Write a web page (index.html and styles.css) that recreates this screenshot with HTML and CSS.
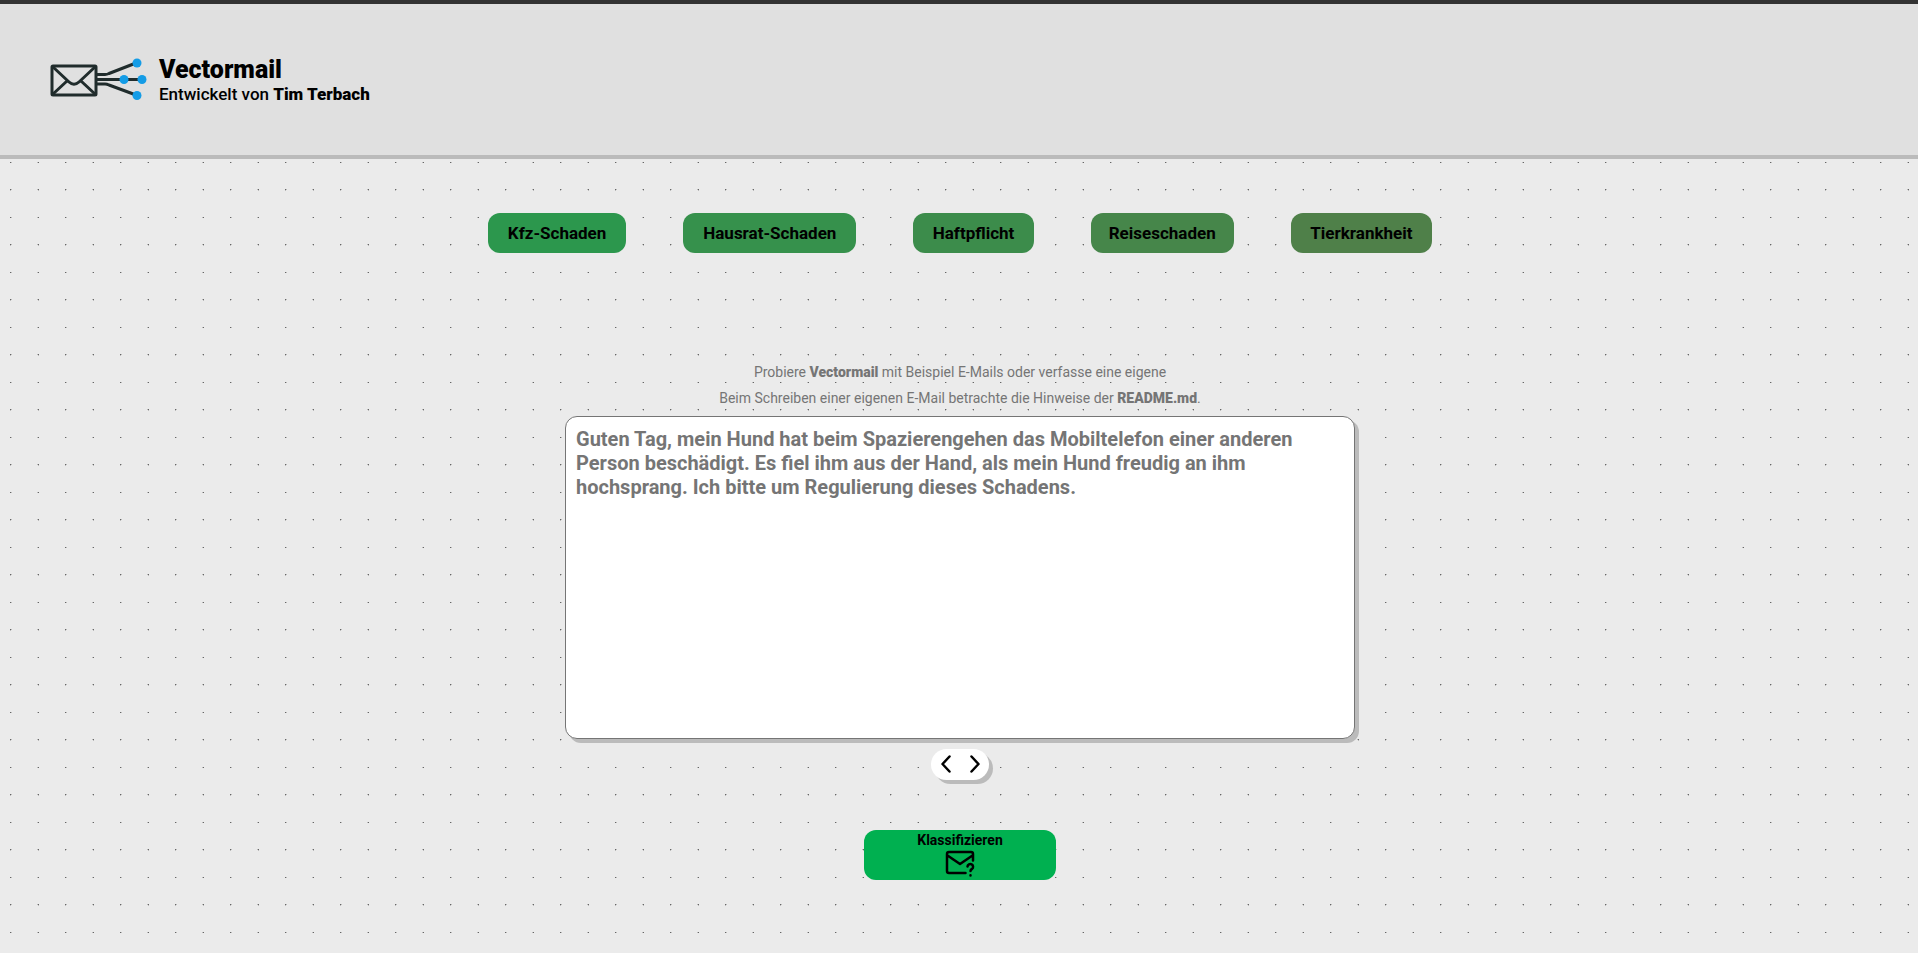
FILE: index.html
```html
<!DOCTYPE html>
<html lang="de">
<head>
<meta charset="utf-8">
<meta name="viewport" content="width=device-width, initial-scale=1">
<title>Vectormail</title>
<link rel="stylesheet" href="styles.css">
</head>
<body>
<header class="header">
  <svg class="logo" viewBox="0 0 100 48" aria-hidden="true">
    <g class="logo-lines">
      <rect x="3" y="10" width="44" height="29" rx="1"/>
      <path d="M4 11 L20 26 Q25 30.500 30 26 L46 11 M4 38 L18 25 M46 38 L32 25"/>
      <path d="M47 18.500 H56 Q58 18.500 60 17.500 L87 7 M47 23.500 H90 M47 28 H56 Q58 28 60 29 L87 39"/>
    </g>
    <g class="logo-dots">
      <circle cx="88" cy="7" r="4.500"/>
      <circle cx="75" cy="23.500" r="4.500"/>
      <circle cx="93" cy="23.500" r="4.500"/>
      <circle cx="88" cy="39.500" r="4.500"/>
    </g>
  </svg>
  <div class="brand">
    <h1 class="brand-name">Vectormail</h1>
    <p class="brand-author">Entwickelt von <strong>Tim Terbach</strong></p>
  </div>
</header>
<main class="main">
  <div class="categories">
    <button class="category category-kfz" type="button">Kfz-Schaden</button>
    <button class="category category-hausrat" type="button">Hausrat-Schaden</button>
    <button class="category category-haftpflicht" type="button">Haftpflicht</button>
    <button class="category category-reise" type="button">Reiseschaden</button>
    <button class="category category-tier" type="button">Tierkrankheit</button>
  </div>
  <label class="hint" for="mail">Probiere <strong>Vectormail</strong> mit Beispiel E-Mails oder verfasse eine eigene<br>Beim Schreiben einer eigenen E-Mail betrachte die Hinweise der <strong>README.md</strong>.</label>
  <textarea class="mail" id="mail" placeholder="Guten Tag, mein Hund hat beim Spazierengehen das Mobiltelefon einer anderen&#10;Person beschädigt. Es fiel ihm aus der Hand, als mein Hund freudig an ihm&#10;hochsprang. Ich bitte um Regulierung dieses Schadens."></textarea>
  <div class="pager">
    <button class="pager-button" type="button" aria-label="Vorheriges Beispiel">
      <svg class="chevron" viewBox="0 0 10 18" aria-hidden="true"><path d="M8.500 1.500 L1.500 9 L8.500 16.500"/></svg>
    </button>
    <button class="pager-button" type="button" aria-label="Nächstes Beispiel">
      <svg class="chevron" viewBox="0 0 10 18" aria-hidden="true"><path d="M1.500 1.500 L8.500 9 L1.500 16.500"/></svg>
    </button>
  </div>
  <button class="classify" type="button">
    <span>Klassifizieren</span>
    <svg class="classify-icon" viewBox="0 0 28 26" aria-hidden="true">
      <path d="M19.500 22 H3 Q1 22 1 20 V3 Q1 1 3 1 H25 Q27 1 27 3 V9.500 M1.500 4.500 L14 13 L26.500 4.500"/>
      <path d="M21.500 15.500 A2.800 2.800 0 1 1 26 18 Q24.500 18.700 24.500 20 M24.500 24.200 V24.400"/>
    </svg>
  </button>
</main>
</body>
</html>
```
FILE: styles.css
```css
* {
  box-sizing: border-box;
}

body {
  margin: 0;
  min-height: 100vh;
  color: #000;
  font-family: Roboto, "Liberation Sans", sans-serif;
  background-color: #ebebeb;
  background-image: url("data:image/svg+xml,%3Csvg xmlns='http://www.w3.org/2000/svg' width='55' height='55' shape-rendering='crispEdges'%3E%3Cg fill='%23666'%3E%3Crect x='10' y='52' width='1' height='1'/%3E%3Crect x='38' y='52' width='1' height='1'/%3E%3Crect x='10' y='24' width='1' height='1'/%3E%3Crect x='38' y='24' width='1' height='1'/%3E%3C/g%3E%3Cg fill='%23bbb'%3E%3Crect x='11' y='52' width='1' height='1'/%3E%3Crect x='37' y='52' width='1' height='1'/%3E%3Crect x='11' y='24' width='1' height='1'/%3E%3Crect x='37' y='24' width='1' height='1'/%3E%3Crect x='10' y='25' width='1' height='1'/%3E%3Crect x='38' y='25' width='1' height='1'/%3E%3C/g%3E%3C/svg%3E");
}

button {
  border: 0;
  padding: 0;
  color: inherit;
  font-family: inherit;
  cursor: pointer;
}

.header {
  display: flex;
  align-items: center;
  gap: 10px;
  padding: 50px 49px;
  border-top: 4px solid #333;
  border-bottom: 4px solid #bbb;
  background: #e0e0e0;
}

.logo {
  width: 100px;
  height: 48px;
}

.logo-lines {
  fill: none;
  stroke: #202c2c;
  stroke-width: 3;
  stroke-linejoin: round;
}

.logo-dots {
  fill: #149ce6;
}

.brand-name {
  margin: 0;
  padding-top: 3px;
  font-size: 25px;
  font-weight: 900;
  line-height: 26px;
}

.brand-author {
  margin: 0;
  font-size: 17px;
  font-weight: 500;
  line-height: 22px;
}

.brand-author strong {
  font-weight: 900;
}

.main {
  display: flex;
  flex-direction: column;
  align-items: center;
  padding: 54px 16px 54px 18px;
}

.categories {
  display: grid;
  grid-template-columns: 138fr 173fr 120fr 143fr 141fr;
  gap: 57px;
  width: 100%;
  max-width: 944px;
  margin-bottom: 106px;
}

.category {
  height: 40px;
  border-radius: 12px;
  font-size: 17px;
  font-weight: 700;
}

.category-kfz {
  background: #2c974d;
}

.category-hausrat {
  background: #36914c;
}

.category-haftpflicht {
  background: #3c8c4b;
}

.category-reise {
  background: #46864a;
}

.category-tier {
  background: #4f8049;
}

.hint {
  margin-bottom: 5px;
  color: #757575;
  font-size: 14px;
  font-weight: 400;
  line-height: 26px;
  text-align: center;
}

.hint strong {
  font-weight: 900;
}

.mail {
  width: 100%;
  max-width: 790px;
  height: 323px;
  padding: 10px;
  border: 1px solid #757575;
  border-radius: 12px;
  background: #fff;
  box-shadow: 4px 4px #bbb;
  font-family: inherit;
  font-size: 20px;
  font-weight: 700;
  line-height: 24px;
  resize: none;
}

.mail::placeholder {
  color: #757575;
}

.pager {
  display: flex;
  margin: 10px 0 50px;
  border-radius: 16px;
  background: #fff;
  box-shadow: 4px 4px #bbb;
}

.pager-button {
  display: grid;
  place-items: center;
  width: 29px;
  height: 31px;
  padding-bottom: 1px;
  background: none;
}

.chevron {
  width: 10px;
  height: 18px;
  fill: none;
  stroke: #000;
  stroke-width: 2.5;
  stroke-linecap: round;
  stroke-linejoin: round;
}

.classify {
  display: flex;
  flex-direction: column;
  align-items: center;
  gap: 1px;
  width: 192px;
  height: 50px;
  border-radius: 12px;
  background: #00b050;
  font-size: 14px;
  font-weight: 700;
  line-height: 20px;
}

.classify-icon {
  width: 28px;
  height: 26px;
  overflow: visible;
  fill: none;
  stroke: #000;
  stroke-width: 2.5;
  stroke-linecap: round;
  stroke-linejoin: round;
}
```
